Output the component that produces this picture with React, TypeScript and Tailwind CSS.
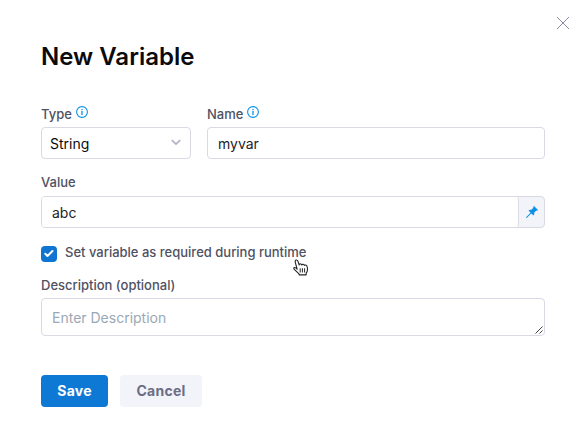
import React from "react";

function InfoIcon() {
  return (
    <svg className="-mt-[5px] ml-1 size-3 shrink-0" viewBox="0 0 12 12" fill="none" stroke="#0b92e5">
      <circle cx="6" cy="6" r="5.4" strokeWidth="1.1" />
      <path d="M6 5.1v3.8M6 2.9v1.3" strokeWidth="1.3" />
    </svg>
  );
}

function Label({ children, info }: { children: React.ReactNode; info?: boolean }) {
  return (
    <div className="flex h-4 items-center text-[13px] leading-4 font-medium text-[#4f5162]">
      <span>{children}</span>
      {info && <InfoIcon />}
    </div>
  );
}

function PointerHand() {
  return (
    <svg className="absolute left-[293px] top-[259px] h-[17px] w-[16px]" viewBox="0 0 16 17" fill="#fff" stroke="#222" strokeWidth="1.1" strokeLinejoin="round" strokeLinecap="round">
      <path d="M4.1 10.2 2.5 4.1Q1.7 1.5 2.9 1Q4.4.6 5.1 2.7L6.2 6Q6.2 4.9 7.3 4.8Q8.4 4.8 8.8 6Q9.1 5.1 10.2 5.2Q11.2 5.3 11.4 6.4Q12 5.8 12.9 6.1Q14.2 6.6 14.4 9L14.5 10.8Q14.3 13 13.2 14L13.1 15.9H6.2L6 14.8L1.3 10.4Q.3 9.1 1.3 8.6Q2.3 8.3 4.1 10.2Z" />
      <path d="M7.2 9.7v3.4M9.4 9.7v3.4M11.6 9.7v3.4" strokeWidth="1" />
    </svg>
  );
}

export default function App() {
  return (
    <main className="relative h-[441px] w-[579px] overflow-hidden bg-white pl-[41px] pr-[34px] pt-[41px] font-['Inter',sans-serif]">
      <button aria-label="Close" className="absolute left-[556px] top-[16px] size-[14px]">
        <svg viewBox="0 0 14 14" className="size-full" fill="none" stroke="#7c7d99" strokeWidth="0.9">
          <path d="m1 1 12 12M13 1 1 13" />
        </svg>
      </button>

      <h1 className="h-8 text-[24px] leading-8 font-semibold text-[#0b0b0d]">New Variable</h1>

      <div className="mt-[33px] flex gap-4">
        <div className="w-[150px]">
          <Label info>Type</Label>
          <div className="mt-[5px] flex h-8 items-center justify-between rounded border border-[#d9dae5] pl-2 pr-[9px] text-[14px] text-[#0b0b0d]">
            <span>String</span>
            <svg className="-mt-[2px] h-[7px] w-[10px]" viewBox="0 0 10 7" fill="none" stroke="#b0b1c3" strokeWidth="1.6">
              <path d="m.8 1.2 4.2 4 4.2-4" />
            </svg>
          </div>
        </div>
        <div className="flex-1">
          <Label info>Name</Label>
          <div className="mt-[5px] flex h-8 items-center rounded border border-[#d9dae5] px-[10px] text-[14px] text-[#22222a]">myvar</div>
        </div>
      </div>

      <div className="mt-[15px]">
        <Label>Value</Label>
        <div className="mt-[6px] flex h-8 rounded border border-[#d9dae5] bg-[#f3f3fa]">
          <div className="flex flex-1 items-center rounded-[3px] border-r border-[#d9dae5] bg-white px-[10px] text-[14px] text-[#22222a]">abc</div>
          <div className="flex w-[25px] items-center justify-center">
            <svg className="size-3" viewBox="0 0 12 12" fill="#0b92e5">
              <path d="M8 0 12 4 11.2 4.8 10.3 4.6 8.2 6.7Q8.6 8.3 7.6 9.4L5.2 7.4 1 11.8 0 12 .3 11 4.6 6.8 2.5 4.4Q3.7 3.4 5.3 3.8L7.4 1.7 7.2.8Z" />
            </svg>
          </div>
        </div>
      </div>

      <div className="mt-4 flex h-[18px] items-start">
        <div className="mt-[2px] flex size-4 items-center justify-center rounded-[4px] bg-[#0e75d3]">
          <svg className="size-4" viewBox="0 0 16 16" fill="none" stroke="#fff" strokeWidth="2" strokeLinecap="round" strokeLinejoin="round">
            <path d="m4.3 7.8 2.2 2.2 5-5" />
          </svg>
        </div>
        <span className="ml-2 text-[13px] leading-4 font-medium text-[#4f5162]">Set variable as required during runtime</span>
      </div>

      <div className="mt-[15px]">
        <Label>Description (optional)</Label>
        <div className="mt-[5px] flex h-[38px] items-center justify-between rounded border border-[#d9dae5] pl-[10px] text-[14px] text-[#9aa8b5]">
          <span>Enter Description</span>
          <svg className="mr-px mb-px size-[8px] self-end" viewBox="0 0 8 8" fill="none" stroke="#444" strokeWidth="1">
            <path d="m.5 7.5 7-7M4.5 7.5l3-3" />
          </svg>
        </div>
      </div>

      <div className="mt-[39px] flex gap-3 text-[14px] font-bold tracking-[0.25px]">
        <button className="h-8 w-[67px] rounded bg-[#0e78d5] pb-[2px] text-white">Save</button>
        <button className="h-8 w-[82px] rounded bg-[#f3f3fa] pb-[2px] text-[#6b6d85]">Cancel</button>
      </div>

      <PointerHand />
    </main>
  );
}
